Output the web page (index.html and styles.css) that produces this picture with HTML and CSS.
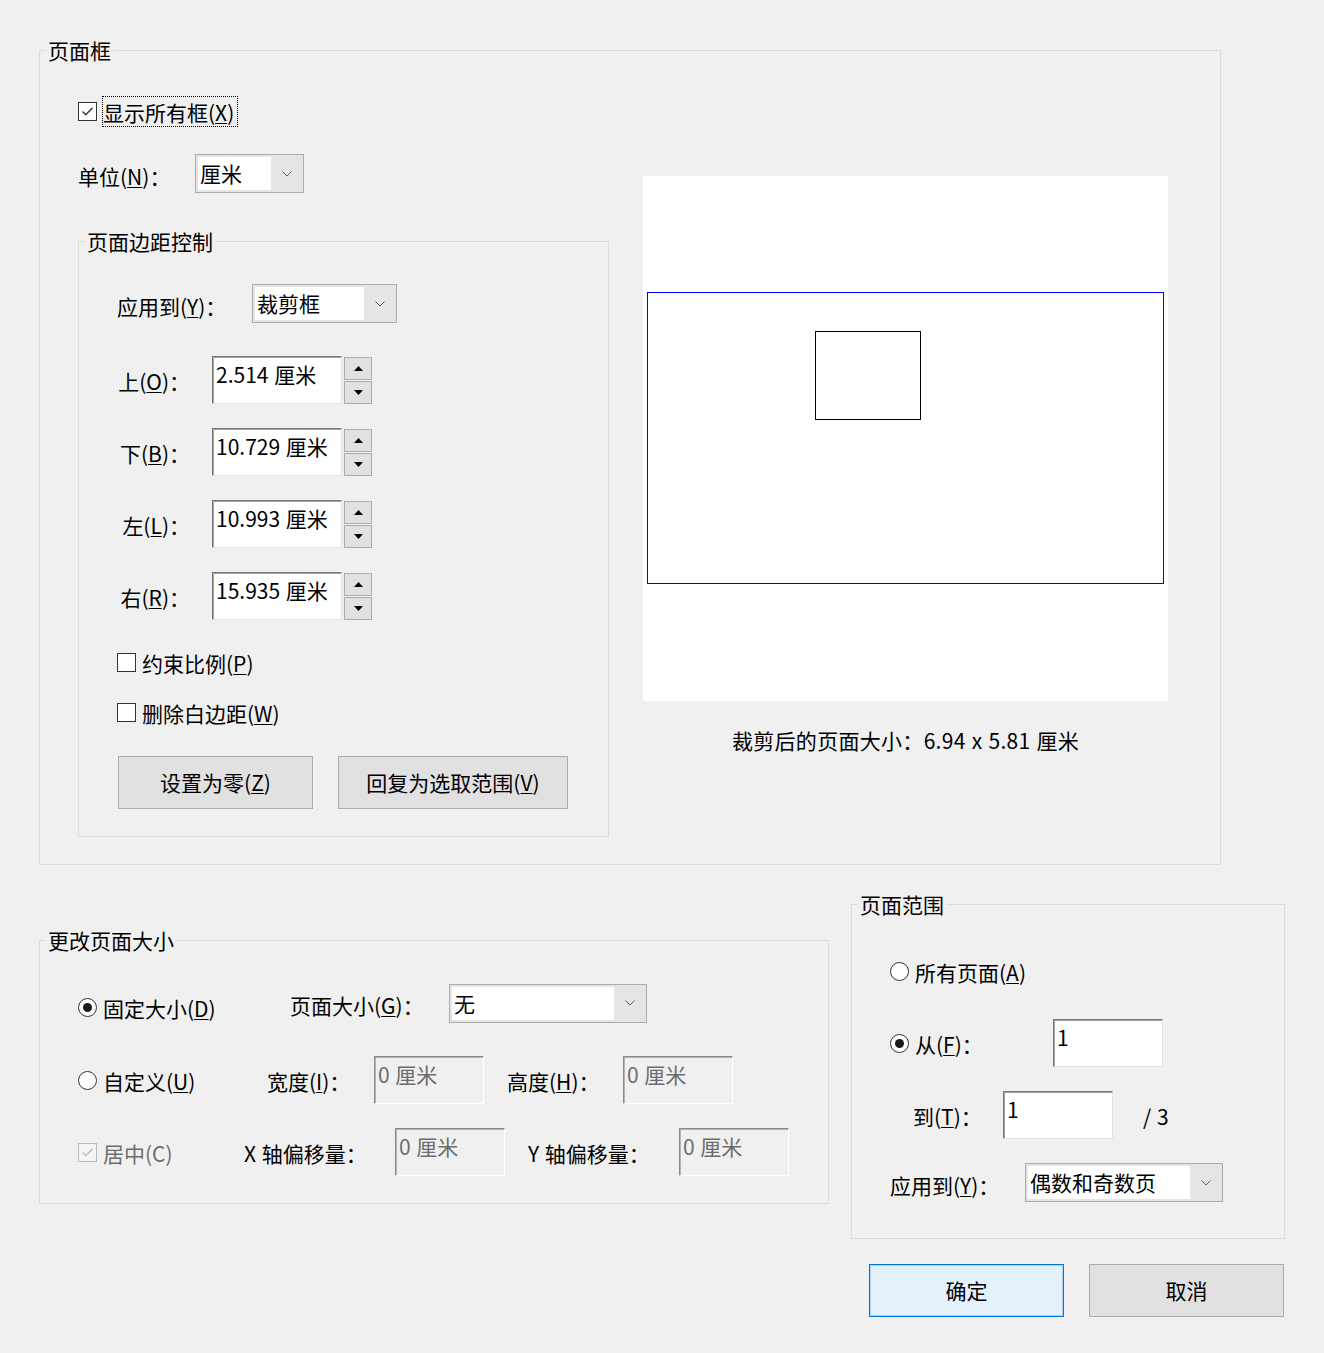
FILE: index.html
```html
<!DOCTYPE html>
<html lang="zh-CN">
<head>
<meta charset="utf-8">
<title>裁剪页面</title>
<link rel="stylesheet" href="styles.css">
</head>
<body>
<div class="dialog">
  <fieldset class="group frame">
    <legend>页面框</legend>
    <div class="frame-body">
      <div class="frame-left">
        <div class="opt first-opt">
          <span class="box cb"><svg width="17" height="17" viewBox="0 0 17 17"><polyline points="3.5,8.5 6.8,11.8 13.5,4.8"/></svg></span>
          <span class="opt-text focus">显示所有框(<u>X</u>)</span>
        </div>
        <div class="unit-row">
          <span class="lbl dd-lbl unit-lbl">单位(<u>N</u>)：</span>
          <div class="combo combo-unit">
            <span class="combo-text">厘米</span>
            <span class="combo-arrow"><svg width="10" height="6" viewBox="0 0 10 6"><polyline points="0.5,0.5 5,5 9.5,0.5"/></svg></span>
          </div>
        </div>
        <fieldset class="group margins">
          <legend>页面边距控制</legend>
          <div class="margins-body">
            <div class="apply-row">
              <span class="lbl dd-lbl apply-lbl">应用到(<u>Y</u>)：</span>
              <div class="combo combo-apply">
                <span class="combo-text">裁剪框</span>
                <span class="combo-arrow"><svg width="10" height="6" viewBox="0 0 10 6"><polyline points="0.5,0.5 5,5 9.5,0.5"/></svg></span>
              </div>
            </div>
            <div class="spin-row spin-first">
              <span class="lbl edit-lbl">上(<u>O</u>)：</span>
              <div class="edit edit-spin">2.514 厘米</div>
              <div class="spin">
                <span class="spin-btn"><svg width="9" height="5" viewBox="0 0 9 5"><polygon points="0,5 4.5,0 9,5"/></svg></span>
                <span class="spin-btn"><svg width="9" height="5" viewBox="0 0 9 5"><polygon points="0,0 4.5,5 9,0"/></svg></span>
              </div>
            </div>
            <div class="spin-row">
              <span class="lbl edit-lbl">下(<u>B</u>)：</span>
              <div class="edit edit-spin">10.729 厘米</div>
              <div class="spin">
                <span class="spin-btn"><svg width="9" height="5" viewBox="0 0 9 5"><polygon points="0,5 4.5,0 9,5"/></svg></span>
                <span class="spin-btn"><svg width="9" height="5" viewBox="0 0 9 5"><polygon points="0,0 4.5,5 9,0"/></svg></span>
              </div>
            </div>
            <div class="spin-row">
              <span class="lbl edit-lbl">左(<u>L</u>)：</span>
              <div class="edit edit-spin">10.993 厘米</div>
              <div class="spin">
                <span class="spin-btn"><svg width="9" height="5" viewBox="0 0 9 5"><polygon points="0,5 4.5,0 9,5"/></svg></span>
                <span class="spin-btn"><svg width="9" height="5" viewBox="0 0 9 5"><polygon points="0,0 4.5,5 9,0"/></svg></span>
              </div>
            </div>
            <div class="spin-row">
              <span class="lbl edit-lbl">右(<u>R</u>)：</span>
              <div class="edit edit-spin">15.935 厘米</div>
              <div class="spin">
                <span class="spin-btn"><svg width="9" height="5" viewBox="0 0 9 5"><polygon points="0,5 4.5,0 9,5"/></svg></span>
                <span class="spin-btn"><svg width="9" height="5" viewBox="0 0 9 5"><polygon points="0,0 4.5,5 9,0"/></svg></span>
              </div>
            </div>
            <div class="opt cb-row-1">
              <span class="box cb"></span>
              <span class="opt-text">约束比例(<u>P</u>)</span>
            </div>
            <div class="opt cb-row-2">
              <span class="box cb"></span>
              <span class="opt-text">删除白边距(<u>W</u>)</span>
            </div>
            <div class="btn-row">
              <button class="btn btn-zero">设置为零(<u>Z</u>)</button>
              <button class="btn btn-restore">回复为选取范围(<u>V</u>)</button>
            </div>
          </div>
        </fieldset>
      </div>
      <div class="frame-right">
        <div class="preview">
          <svg width="525" height="525" viewBox="0 0 525 525">
            <rect class="crop-rect" x="4.5" y="116.5" width="516" height="291"/>
            <rect class="page-rect" x="172.5" y="155.5" width="105" height="88"/>
          </svg>
        </div>
        <div class="caption">裁剪后的页面大小：6.94 x 5.81 厘米</div>
      </div>
    </div>
  </fieldset>

  <div class="bottom">
    <fieldset class="group resize">
      <legend>更改页面大小</legend>
      <div class="resize-body">
        <div class="r-row r-row1">
          <div class="opt dd-offset">
            <span class="box rb"><span class="dot"></span></span>
            <span class="opt-text">固定大小(<u>D</u>)</span>
          </div>
          <span class="lbl dd-lbl">页面大小(<u>G</u>)：</span>
          <div class="combo combo-size">
            <span class="combo-text">无</span>
            <span class="combo-arrow"><svg width="10" height="6" viewBox="0 0 10 6"><polyline points="0.5,0.5 5,5 9.5,0.5"/></svg></span>
          </div>
        </div>
        <div class="r-row r-row2">
          <div class="opt">
            <span class="box rb"></span>
            <span class="opt-text">自定义(<u>U</u>)</span>
          </div>
          <span class="lbl edit-lbl-l">宽度(<u>I</u>)：</span>
          <div class="edit edit-dis">0 厘米</div>
          <span class="lbl edit-lbl-l">高度(<u>H</u>)：</span>
          <div class="edit edit-dis">0 厘米</div>
        </div>
        <div class="r-row r-row3">
          <div class="opt">
            <span class="box cb cb-dis"><svg width="17" height="17" viewBox="0 0 17 17"><polyline points="3.5,8.5 6.8,11.8 13.5,4.8"/></svg></span>
            <span class="opt-text dis">居中(C)</span>
          </div>
          <span class="lbl edit-lbl-l">X 轴偏移量：</span>
          <div class="edit edit-dis">0 厘米</div>
          <span class="lbl edit-lbl-l">Y 轴偏移量：</span>
          <div class="edit edit-dis">0 厘米</div>
        </div>
      </div>
    </fieldset>

    <div class="bottom-right">
      <fieldset class="group range">
        <legend>页面范围</legend>
        <div class="range-body">
          <div class="opt">
            <span class="box rb"></span>
            <span class="opt-text">所有页面(<u>A</u>)</span>
          </div>
          <div class="g-row g-row2">
            <div class="opt from-opt">
              <span class="box rb"><span class="dot"></span></span>
              <span class="opt-text">从(<u>F</u>)：</span>
            </div>
            <div class="edit edit-page">1</div>
          </div>
          <div class="g-row g-row3">
            <span class="lbl edit-lbl-l to-lbl">到(<u>T</u>)：</span>
            <div class="edit edit-page">1</div>
            <span class="page-count">/ 3</span>
          </div>
          <div class="g-row g-row4">
            <span class="lbl dd-lbl range-apply-lbl">应用到(<u>Y</u>)：</span>
            <div class="combo combo-size">
              <span class="combo-text">偶数和奇数页</span>
              <span class="combo-arrow"><svg width="10" height="6" viewBox="0 0 10 6"><polyline points="0.5,0.5 5,5 9.5,0.5"/></svg></span>
            </div>
          </div>
        </div>
      </fieldset>
      <div class="actions">
        <button class="btn btn-ok">确定</button>
        <button class="btn btn-cancel">取消</button>
      </div>
    </div>
  </div>
</div>
</body>
</html>
```

FILE: styles.css
```css
html, body {
  margin: 0;
  padding: 0;
}

body {
  background: #f0f0f0;
  color: #000;
  font-family: "Noto Sans CJK SC", "Noto Sans CJK JP", sans-serif;
  font-size: 21px;
  line-height: 27px;
  word-spacing: 1px;
}

.dialog {
  padding: 37px 0 36px 39px;
}

/* ---------- group boxes ---------- */
fieldset.group {
  margin: 0;
  padding: 0;
  border: 1px solid #dcdcdc;
  min-width: 0;
  box-sizing: border-box;
}

.group > legend {
  margin-left: 6px;
  padding: 0 2px;
  line-height: 27px;
}

u {
  text-decoration-thickness: 1px;
  text-underline-offset: 2px;
}

/* ---------- top frame ---------- */
.frame {
  width: 1182px;
}

.frame-body {
  display: flex;
  align-items: flex-start;
  padding: 0 0 27px 38px;
}

.frame-left {
  width: 531px;
  padding-top: 32px;
}

.frame-right {
  width: 525px;
  margin-left: 34px;
  padding-top: 112px;
}

/* ---------- options (checkbox / radio) ---------- */
.opt {
  display: flex;
  align-items: center;
  height: 31px;
}

.box {
  width: 19px;
  height: 19px;
  box-sizing: border-box;
  flex: none;
  margin-right: 5px;
}

.cb {
  border: 1px solid #333;
  background: #fff;
  display: flex;
  align-items: center;
  justify-content: center;
}

.cb svg {
  display: block;
}

.cb polyline {
  fill: none;
  stroke: #333;
  stroke-width: 1.3;
}

.cb-dis {
  border-color: #bcbcbc;
  background: #f5f5f5;
}

.cb-dis polyline {
  stroke: #bcbcbc;
}

.rb {
  border: 1px solid #333;
  border-radius: 50%;
  background: #fff;
  display: flex;
  align-items: center;
  justify-content: center;
}

.rb .dot {
  width: 9px;
  height: 9px;
  border-radius: 50%;
  background: #1a1a1a;
}

.opt-text {
  border: 1px solid transparent;
  padding-top: 1px;
  line-height: 28px;
  white-space: nowrap;
}

.opt-text.focus {
  border: 1px dotted #000;
  padding-right: 3px;
}

.dis {
  color: #6d6d6d;
}

/* ---------- labels ---------- */
.lbl {
  white-space: nowrap;
  box-sizing: border-box;
}

.dd-lbl {
  align-self: flex-start;
  margin-top: 9px;
}

.unit-lbl {
  width: 117px;
}

.apply-lbl {
  width: 135px;
}

.edit-lbl {
  width: 95px;
  text-align: right;
  padding-right: 22px;
  padding-top: 3px;
}

.edit-lbl-l {
  padding-top: 3px;
}

/* ---------- combo box ---------- */
.combo {
  display: flex;
  height: 39px;
  box-sizing: border-box;
  border: 1px solid #adadad;
  background: #e5e5e5;
  padding: 2px 0 2px 2px;
}

.combo-text {
  flex: 1;
  background: #fff;
  padding-left: 2px;
  line-height: 33px;
  white-space: nowrap;
  overflow: hidden;
}

.combo-arrow {
  width: 32px;
  flex: none;
  display: flex;
  align-items: center;
  justify-content: center;
}

.combo-arrow svg {
  display: block;
}

.combo-arrow polyline {
  fill: none;
  stroke: #606060;
  stroke-width: 1;
}

.combo-unit {
  width: 109px;
}

.combo-apply {
  width: 145px;
}

.combo-size {
  width: 198px;
}

.unit-row {
  display: flex;
  align-items: center;
  margin-top: 27px;
}

/* ---------- margins group ---------- */
fieldset.margins {
  width: 531px;
  margin-top: 35px;
}

.margins-body {
  padding: 29px 0 27px 38px;
}

.apply-row {
  display: flex;
  align-items: center;
}

.spin-row {
  display: flex;
  align-items: center;
  margin-top: 24px;
}

.spin-row.spin-first {
  margin-top: 33px;
}

/* ---------- edit boxes ---------- */
.edit {
  height: 48px;
  box-sizing: border-box;
  background: #fff;
  border: 1px solid;
  border-color: #7a7a7a #e3e3e3 #e3e3e3 #7a7a7a;
  box-shadow: inset 1px 1px 0 #a0a0a0;
  padding: 4px 2px 0 3px;
  line-height: 27px;
  white-space: nowrap;
  overflow: hidden;
}

.edit-spin {
  width: 130px;
}

.edit-dis {
  width: 110px;
  background: #f0f0f0;
  color: #6d6d6d;
  border-color: #8a8a8a #fff #fff #8a8a8a;
  box-shadow: inset 1px 1px 0 #b4b4b4;
}

.edit-page {
  width: 110px;
}

.spin {
  display: flex;
  flex-direction: column;
  gap: 1px;
  margin-left: 2px;
  align-self: flex-start;
  margin-top: 1px;
}

.spin-btn {
  width: 28px;
  height: 23px;
  box-sizing: border-box;
  border: 1px solid #adadad;
  background: #e1e1e1;
  display: flex;
  align-items: center;
  justify-content: center;
}

.spin-btn svg {
  display: block;
}

.spin-btn polygon {
  fill: #000;
}

.cb-row-1 {
  margin-top: 27px;
}

.cb-row-2 {
  margin-top: 19px;
}

/* ---------- buttons ---------- */
.btn {
  height: 53px;
  box-sizing: border-box;
  border: 1px solid #adadad;
  background: #e1e1e1;
  color: #000;
  font: inherit;
  line-height: 27px;
  word-spacing: inherit;
  padding: 0;
  border-radius: 0;
}

.btn-row {
  display: flex;
  gap: 25px;
  margin-top: 28px;
  padding-left: 1px;
}

.btn-zero {
  width: 195px;
}

.btn-restore {
  width: 230px;
}

/* ---------- preview ---------- */
.preview {
  width: 525px;
  height: 525px;
  background: #fff;
}

.preview svg {
  display: block;
}

.crop-rect {
  fill: none;
  stroke: #0000ff;
  stroke-width: 1;
}

.page-rect {
  fill: none;
  stroke: #000;
  stroke-width: 1;
}

.caption {
  margin-top: 26px;
  text-align: center;
  white-space: nowrap;
  letter-spacing: 0.3px;
}

/* ---------- bottom area ---------- */
.bottom {
  display: flex;
  align-items: flex-start;
  margin-top: 26px;
}

fieldset.resize {
  width: 790px;
  margin-top: 36px;
}

.resize-body {
  padding: 29px 0 27px 38px;
}

.r-row {
  display: grid;
  align-items: center;
}

.r-row1 {
  grid-template-columns: 212px 159px 198px;
}

.r-row1 .dd-offset {
  align-self: start;
  margin-top: 9px;
}

.r-row1 .dd-lbl {
  align-self: start;
}

.r-row2 {
  grid-template-columns: 189px 107px 133px 116px 110px;
  margin-top: 33px;
}

.r-row3 {
  grid-template-columns: 166px 151px 133px 151px 110px;
  margin-top: 24px;
}

.bottom-right {
  width: 434px;
  margin-left: 22px;
}

fieldset.range {
  width: 434px;
}

.range-body {
  padding: 38px 0 36px 38px;
}

.g-row {
  display: flex;
  align-items: center;
}

.g-row2 {
  margin-top: 32px;
}

.from-opt {
  width: 163px;
}

.g-row3 {
  margin-top: 24px;
  padding-left: 23px;
}

.to-lbl {
  width: 90px;
}

.page-count {
  margin-left: 30px;
  padding-top: 3px;
}

.g-row4 {
  margin-top: 24px;
}

.range-apply-lbl {
  width: 135px;
}

.actions {
  display: flex;
  gap: 25px;
  margin-top: 25px;
  padding-left: 18px;
}

.btn-ok {
  width: 195px;
  border-color: #0078d7;
  background: #e5f1fb;
  box-shadow: inset 0 0 0 1px #a9d0f2;
}

.btn-cancel {
  width: 195px;
}
```
